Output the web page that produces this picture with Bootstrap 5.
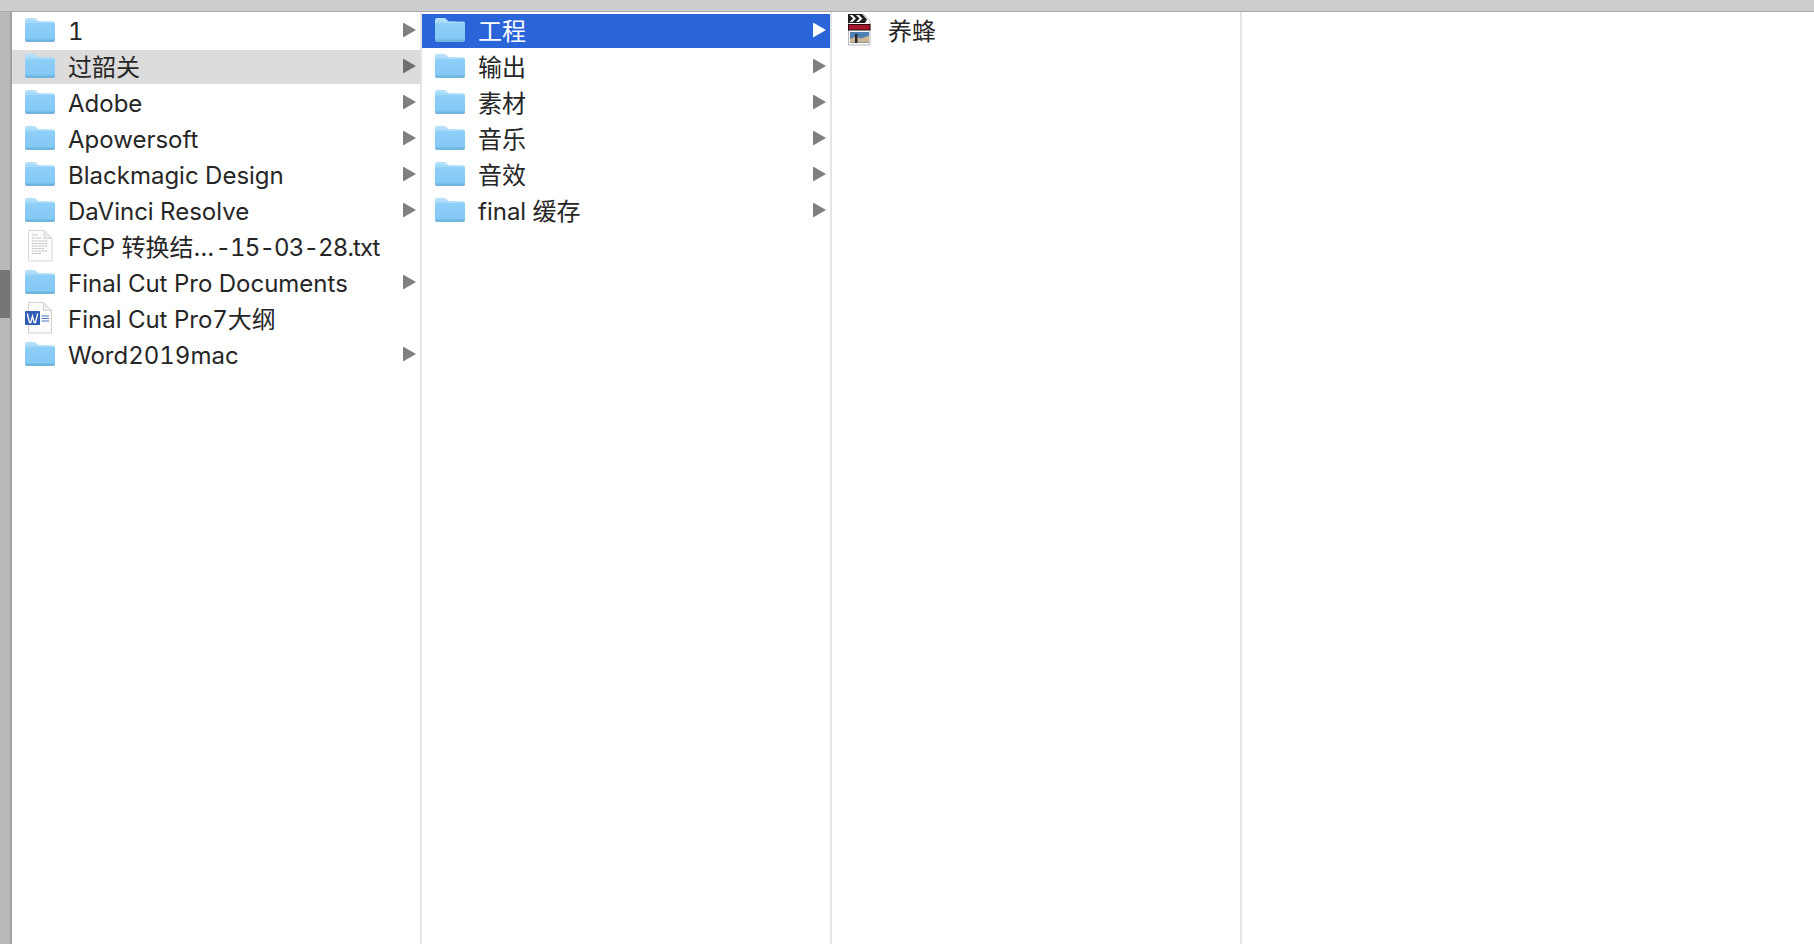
<!DOCTYPE html>
<html lang="zh">
<head>
  <meta charset="UTF-8" />
  <meta name="viewport" content="width=device-width, initial-scale=1" />
  <title>Finder</title>
  <link href="https://cdn.jsdelivr.net/npm/bootstrap@5.3.2/dist/css/bootstrap.min.css" rel="stylesheet">
  <style>
    html, body { height: 100%; }
    body {
      background: #fff;
      color: #262626;
      font-family: Inter, "Noto Sans CJK SC", sans-serif;
      font-size: 24px;
      font-variant-numeric: tabular-nums;
      overflow: hidden;
    }
    .top-strip { height: 12px; background: #cdcdcd; border-bottom: 1px solid #a9a9a9; }
    .side-strip { width: 12px; background: #bababa; border-right: 2px solid #a0a0a0; padding-top: 258px; }
    .side-thumb { height: 48px; background: #767676; }
    .browser-col { width: 410px; border-right: 2px solid #e4e4e4; padding-top: 2px; }
    .file-row { height: 34px; margin-bottom: 2px; padding-left: 13px; padding-right: 4px; white-space: nowrap; line-height: 34px; }
    .file-icon { width: 43px; height: 34px; padding-bottom: 2px; flex: none; }
    .file-icon svg { display: block; }
    .file-name { padding-top: 2px; }
    .name-dots { letter-spacing: 1.2px; }
    .name-tail { letter-spacing: -.9px; }
    .row-hover { background: #dcdcdc; }
    .row-active { background: #2a64d9; color: #fff; }
    .caret-mark { width: 13px; height: 15px; margin-bottom: 2px; flex: none; background: #808080; clip-path: polygon(0 0, 100% 50%, 0 100%); }
    .row-active .caret-mark { background: #fff; }
    .row-hover .caret-mark { background: #6f6f6f; }
  </style>
</head>
<body class="d-flex flex-column">

<svg width="0" height="0" class="position-absolute">
  <defs>
    <linearGradient id="folderFill" x1="0" y1="0" x2="0" y2="1">
      <stop offset="0" stop-color="#90d0f8"/>
      <stop offset="1" stop-color="#82c7f5"/>
    </linearGradient>
    <symbol id="folder" viewBox="0 0 30 24">
      <path d="M0 6V2q0-2 2-2h7q1.500 0 2.500 1.200L13.500 3.500H20V8H0z" fill="#b4dffb"/>
      <path d="M0 6q0-2.500 2.500-2.500h25q2.500 0 2.500 2.500v15.500q0 2-2 2H2q-2 0-2-2z" fill="url(#folderFill)"/>
      <path d="M0 4.500h30" stroke="#b4dffb" stroke-width="1" stroke-opacity=".7"/>
      <path d="M0 22q0 2 2 2h26q2 0 2-2v-.500H0z" fill="#72b3e0"/>
    </symbol>
  </defs>
</svg>

<div class="top-strip flex-shrink-0"></div>

<div class="d-flex flex-grow-1">
  <div class="side-strip flex-shrink-0"><div class="side-thumb"></div></div>

  <!-- first column -->
  <div class="browser-col flex-shrink-0">
    <div class="file-row d-flex align-items-center"><div class="file-icon d-flex align-items-center"><svg width="30" height="24"><use href="#folder"/></svg></div><span class="file-name flex-grow-1">1</span><i class="caret-mark"></i></div>
    <div class="file-row row-hover d-flex align-items-center"><div class="file-icon d-flex align-items-center"><svg width="30" height="24"><use href="#folder"/></svg></div><span class="file-name flex-grow-1">过韶关</span><i class="caret-mark"></i></div>
    <div class="file-row d-flex align-items-center"><div class="file-icon d-flex align-items-center"><svg width="30" height="24"><use href="#folder"/></svg></div><span class="file-name flex-grow-1">Adobe</span><i class="caret-mark"></i></div>
    <div class="file-row d-flex align-items-center"><div class="file-icon d-flex align-items-center"><svg width="30" height="24"><use href="#folder"/></svg></div><span class="file-name flex-grow-1">Apowersoft</span><i class="caret-mark"></i></div>
    <div class="file-row d-flex align-items-center"><div class="file-icon d-flex align-items-center"><svg width="30" height="24"><use href="#folder"/></svg></div><span class="file-name flex-grow-1">Blackmagic Design</span><i class="caret-mark"></i></div>
    <div class="file-row d-flex align-items-center"><div class="file-icon d-flex align-items-center"><svg width="30" height="24"><use href="#folder"/></svg></div><span class="file-name flex-grow-1">DaVinci Resolve</span><i class="caret-mark"></i></div>
    <div class="file-row d-flex align-items-center">
      <div class="file-icon d-flex align-items-center">
        <svg width="30" height="32" viewBox="0 0 30 32">
          <path d="M3.500 .5h15.500l8 8v22.500H3.500z" fill="#fcfcfc" stroke="#d6d6d6"/>
          <path d="M19 .5v8h8z" fill="#ececec" stroke="#d6d6d6"/>
          <path d="M7 5h6M7 8h9M7 11h16M7 13.500h15M7 16h16M7 18.500h12M7 21h15M7 23.500h9" stroke="#b9b9b9" stroke-width=".9" stroke-dasharray="2.500 .7"/>
        </svg>
      </div>
      <span class="file-name flex-grow-1">FCP 转换结<span class="name-dots">…</span><span class="name-tail">-15-03-28.txt</span></span>
    </div>
    <div class="file-row d-flex align-items-center"><div class="file-icon d-flex align-items-center"><svg width="30" height="24"><use href="#folder"/></svg></div><span class="file-name flex-grow-1">Final Cut Pro Documents</span><i class="caret-mark"></i></div>
    <div class="file-row d-flex align-items-center">
      <div class="file-icon d-flex align-items-center">
        <svg width="30" height="32" viewBox="0 0 30 32">
          <path d="M3.500 .5h15l8 8v22.500H3.500z" fill="#fcfcfc" stroke="#d2d2d2"/>
          <path d="M18.500 .5v8h8z" fill="#ececec" stroke="#d2d2d2"/>
          <rect x="0" y="9" width="15" height="14" rx="1" fill="#2f5cb5"/>
          <path d="M2.300 11.500l2.200 9h1.300l1.700-6.500 1.700 6.500h1.300l2.200-9" fill="none" stroke="#fff" stroke-width="1.300"/>
          <path d="M16.500 14h7.500M16.500 16.500h7.500M16.500 19h7.500" stroke="#4a74c4" stroke-width="1"/>
        </svg>
      </div>
      <span class="file-name flex-grow-1">Final Cut Pro7大纲</span>
    </div>
    <div class="file-row d-flex align-items-center"><div class="file-icon d-flex align-items-center"><svg width="30" height="24"><use href="#folder"/></svg></div><span class="file-name flex-grow-1">Word2019mac</span><i class="caret-mark"></i></div>
  </div>

  <!-- second column -->
  <div class="browser-col flex-shrink-0">
    <div class="file-row row-active d-flex align-items-center"><div class="file-icon d-flex align-items-center"><svg width="30" height="24"><use href="#folder"/></svg></div><span class="file-name flex-grow-1">工程</span><i class="caret-mark"></i></div>
    <div class="file-row d-flex align-items-center"><div class="file-icon d-flex align-items-center"><svg width="30" height="24"><use href="#folder"/></svg></div><span class="file-name flex-grow-1">输出</span><i class="caret-mark"></i></div>
    <div class="file-row d-flex align-items-center"><div class="file-icon d-flex align-items-center"><svg width="30" height="24"><use href="#folder"/></svg></div><span class="file-name flex-grow-1">素材</span><i class="caret-mark"></i></div>
    <div class="file-row d-flex align-items-center"><div class="file-icon d-flex align-items-center"><svg width="30" height="24"><use href="#folder"/></svg></div><span class="file-name flex-grow-1">音乐</span><i class="caret-mark"></i></div>
    <div class="file-row d-flex align-items-center"><div class="file-icon d-flex align-items-center"><svg width="30" height="24"><use href="#folder"/></svg></div><span class="file-name flex-grow-1">音效</span><i class="caret-mark"></i></div>
    <div class="file-row d-flex align-items-center"><div class="file-icon d-flex align-items-center"><svg width="30" height="24"><use href="#folder"/></svg></div><span class="file-name flex-grow-1">final 缓存</span><i class="caret-mark"></i></div>
  </div>

  <!-- third column -->
  <div class="browser-col flex-shrink-0">
    <div class="file-row d-flex align-items-center">
      <div class="file-icon d-flex align-items-center">
        <svg width="30" height="32" viewBox="0 0 30 32">
          <path d="M3.500 .5h15l6.500 6v24.500H3.500z" fill="#fbfbfb" stroke="#b5b5b5"/>
          <path d="M3 0h14l5 5.500-2 3.500H3z" fill="#1d1d1d"/>
          <path d="M4.500 1l3.500 3.500L4.500 8h3L11 4.500 7.500 1zM11 1l3.500 3.500L11 8h3l3.500-3.500L14 1z" fill="#f4f4f4"/>
          <rect x="3" y="10" width="22.500" height="6.500" fill="#2a0c10"/>
          <rect x="4" y="11" width="20.500" height="4.500" fill="#a8162c"/>
          <rect x="5" y="18" width="19" height="11" fill="#4f7fb4"/>
          <path d="M5 25l6-2.500 5 2 8-3v7H5z" fill="#cdb592"/>
          <path d="M10 20h2.500v9H10z" fill="#2a2a2a"/>
        </svg>
      </div>
      <span class="file-name flex-grow-1">养蜂</span>
    </div>
  </div>

  <div class="flex-grow-1"></div>
</div>

<script src="https://cdn.jsdelivr.net/npm/bootstrap@5.3.2/dist/js/bootstrap.bundle.min.js"></script>
</body>
</html>
